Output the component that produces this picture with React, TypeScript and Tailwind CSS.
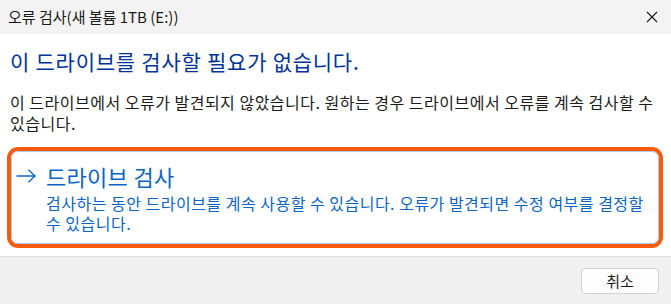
export default function App() {
  return (
    <div className="w-[671px] h-[304px] flex flex-col bg-white text-black font-['Noto_Sans_CJK_KR','Noto_Sans',sans-serif] overflow-hidden">
      {/* title bar */}
      <div className="h-[34px] flex items-center justify-between pl-[8px] pr-[13px] bg-[#f3f3f3]">
        <span className="text-[15px] leading-[20px] text-[#1a1a1a]">오류 검사(새 볼륨 1TB (E:))</span>
        <svg width="12" height="12" viewBox="0 0 12 12" className="text-[#1a1a1a]">
          <path d="M1 1 L11 11 M11 1 L1 11" stroke="currentColor" strokeWidth="1.1" fill="none" />
        </svg>
      </div>

      {/* content */}
      <div className="flex-1 flex flex-col">
        <div className="px-[10px] pt-[13px]">
          <h1 className="text-[21px] leading-[28px] tracking-[0.75px] text-[#003399] font-normal">
            이 드라이브를 검사할 필요가 없습니다.
          </h1>
          <p className="mt-[17px] text-[16px] leading-[21px] tracking-[0.5px] text-[#1a1a1a] break-keep">
            이 드라이브에서 오류가 발견되지 않았습니다. 원하는 경우 드라이브에서 오류를 계속 검사할 수 있습니다.
          </p>
        </div>

        <div className="pl-[7px] pr-[8px] mt-[13px]">
          <div className="border-[4px] border-[#f95b0c] rounded-[11px]">
            <div className="border border-[#a9cdee] rounded-[7px] flex items-start pl-[4px] pr-[6px] pt-[10px] pb-[10px] shadow-[inset_0_0_2px_rgba(0,0,0,0.08)]">
              <div className="h-[28px] w-[20px] flex items-center shrink-0">
                <svg width="20" height="14" viewBox="0 0 20 14" className="text-[#0a64c8]">
                  <path d="M0.5 7 H19 M12.5 0.8 L19 7 L12.5 13.2" stroke="currentColor" strokeWidth="1.3" fill="none" />
                </svg>
              </div>
              <div className="ml-[10px] flex flex-col">
                <span className="text-[22px] leading-[28px] tracking-[0.3px] text-[#0a64c8]">드라이브 검사</span>
                <span className="mt-[3px] text-[16px] leading-[20px] tracking-[0.5px] text-[#0a64c8] break-keep">
                  검사하는 동안 드라이브를 계속 사용할 수 있습니다. 오류가 발견되면 수정 여부를 결정할 수 있습니다.
                </span>
              </div>
            </div>
          </div>
        </div>
      </div>

      {/* footer */}
      <div className="h-[48px] border-t border-[#dfdfdf] bg-[#f0f0f0] flex items-center justify-end pr-[12px]">
        <button className="w-[78px] h-[26px] rounded-[4px] border border-[#d0d0d0] bg-[#fdfdfd] text-[15px] leading-[20px] text-[#1a1a1a]">
          취소
        </button>
      </div>
    </div>
  )
}
